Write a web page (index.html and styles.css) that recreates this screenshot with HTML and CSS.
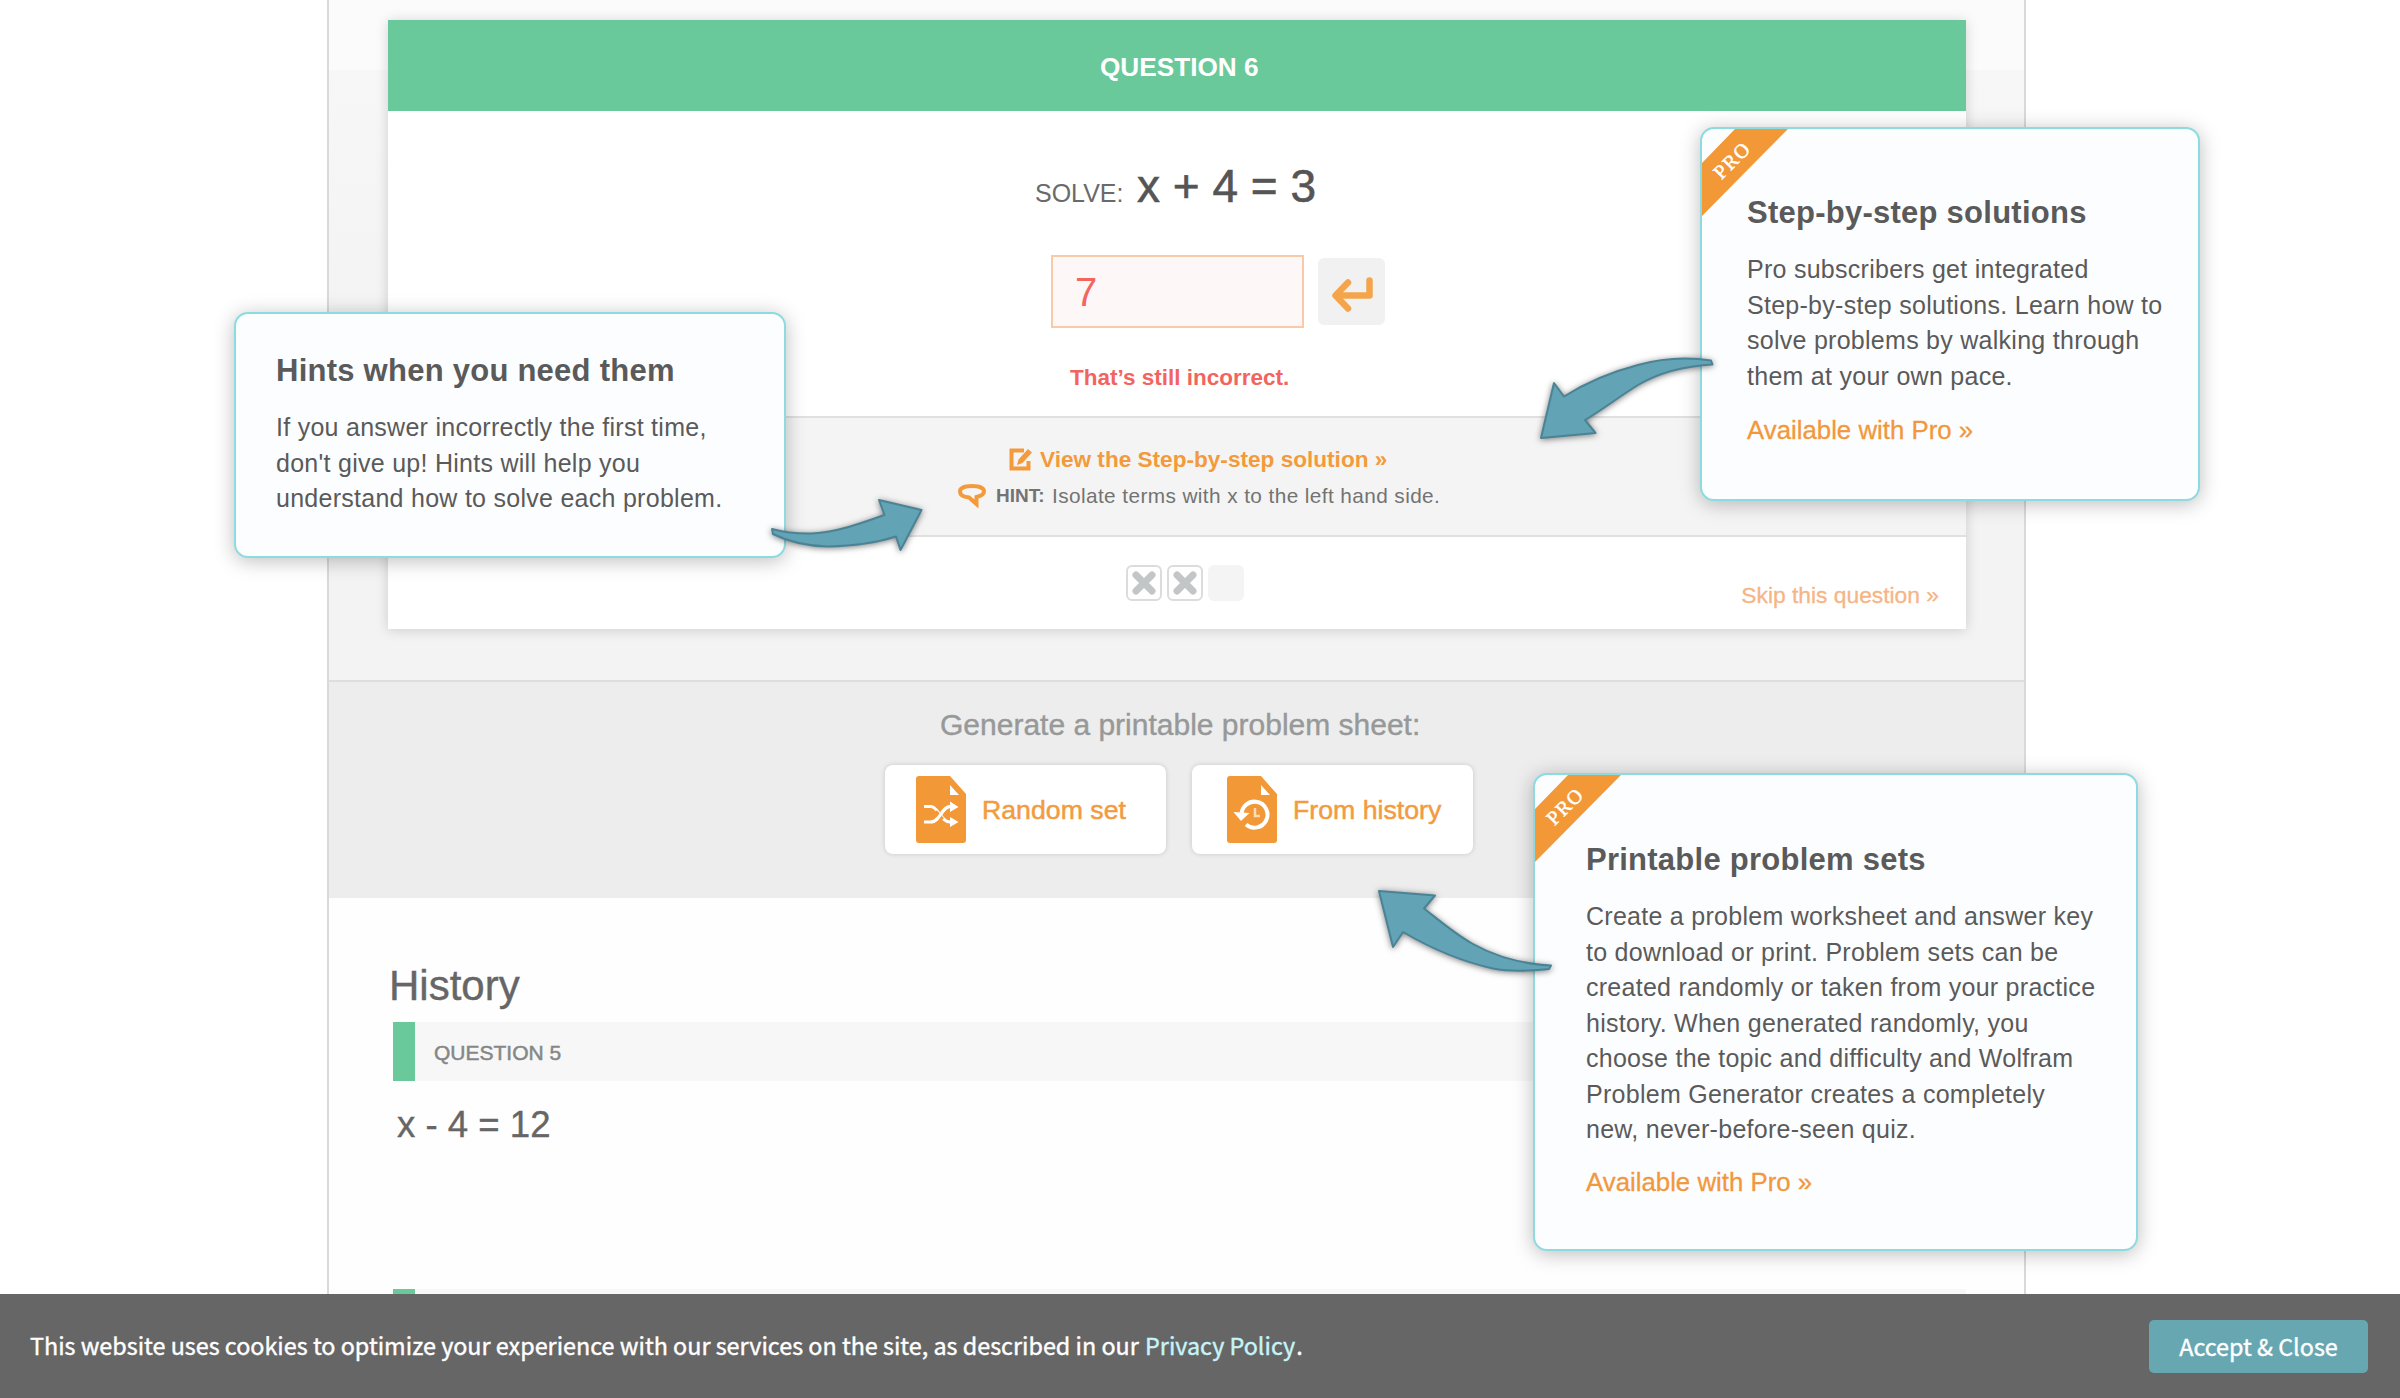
FILE: index.html
```html
<!DOCTYPE html>
<html lang="en">
<head>
<meta charset="utf-8">
<title>Problem Generator</title>
<link rel="stylesheet" href="styles.css">
</head>
<body>
<main class="panel">
  <section class="practice">
    <article class="card">
      <header class="card-head">QUESTION 6</header>
      <div class="card-body">
        <p class="equation"><span class="solve">SOLVE:</span><span class="expr">x + 4 = 3</span></p>
        <div class="answer">
          <div class="field">7</div>
          <div class="enter"><svg width="42" height="40" viewBox="0 0 42 40"><path d="M38.500 6.500V21.500H6M17 8.500 4.500 21.500 17 34.500" fill="none" stroke="#f4a54b" stroke-width="6.500" stroke-linecap="round" stroke-linejoin="round"/></svg></div>
        </div>
        <p class="message">That’s still incorrect.</p>
      </div>
      <div class="help">
        <p class="step"><svg width="24" height="24" viewBox="0 0 24 24"><path d="M15 2.500H2.500V20.500H19.500V13" fill="none" stroke="#f39a3c" stroke-width="4"/><path d="M8 17 9.500 11.500 19 1l4 3.500L13.500 15z" fill="#f39a3c"/></svg><span>View the Step-by-step solution »</span></p>
        <p class="hint"><svg width="28" height="26" viewBox="0 0 28 26"><path d="M14 3C7 3 2 5 2 8.500S6 14 11 14.500L18.500 21V14C23 13 26 11.500 26 8.500 26 5 21 3 14 3z" fill="none" stroke="#f39a3c" stroke-width="4" stroke-linejoin="miter"/></svg><b>HINT:</b><span>Isolate terms with x to the left hand side.</span></p>
      </div>
      <footer class="card-foot">
        <div class="tries">
          <span class="try miss"><svg width="24" height="24" viewBox="0 0 24 24"><path d="M4 4 20 20M20 4 4 20" stroke="#c3c6c6" stroke-width="7" stroke-linecap="round"/></svg></span>
          <span class="try miss"><svg width="24" height="24" viewBox="0 0 24 24"><path d="M4 4 20 20M20 4 4 20" stroke="#c3c6c6" stroke-width="7" stroke-linecap="round"/></svg></span>
          <span class="try"></span>
        </div>
        <a class="skip">Skip this question »</a>
      </footer>
    </article>
  </section>
  <section class="sheets">
    <h2>Generate a printable problem sheet:</h2>
    <div class="sheet-buttons">
      <a class="sheet"><svg width="50" height="67" viewBox="0 0 50 67"><path d="M3 0H34L50 18V64a3 3 0 0 1-3 3H3a3 3 0 0 1-3-3V3a3 3 0 0 1 3-3z" fill="#f29836"/><path d="M34 9V19H43z" fill="#fff"/><path d="M8 30.500H15C22 30.500 25 46 34 46H36M8 46H15C24 46 26 30.500 34 30.500H36" fill="none" stroke="#fff" stroke-width="3"/><path d="M34 25.500 42.500 31 34 36zM34 41 42.500 46 34 51z" fill="#fff"/><path d="M19 36 26 44" stroke="#f29836" stroke-width="5"/><path d="M15 46C24 46 26 30.500 34 30.500" fill="none" stroke="#fff" stroke-width="3"/></svg><span>Random set</span></a>
      <a class="sheet history-sheet"><svg width="50" height="67" viewBox="0 0 50 67"><path d="M3 0H34L50 18V64a3 3 0 0 1-3 3H3a3 3 0 0 1-3-3V3a3 3 0 0 1 3-3z" fill="#f29836"/><path d="M34 9V19H43z" fill="#fff"/><path d="M14.500 39A13 13 0 1 1 19 48.500" fill="none" stroke="#fff" stroke-width="4"/><path d="M6.500 36 22.500 37 14 45z" fill="#fff"/><path d="M28 32V40H33" fill="none" stroke="#fbdcb8" stroke-width="2.500"/></svg><span>From history</span></a>
    </div>
  </section>
  <section class="history">
    <h1>History</h1>
    <div class="row">QUESTION 5</div>
    <p class="past">x - 4 = 12</p>
    <div class="row"></div>
  </section>
</main>

<aside class="callout hints">
  <h3>Hints when you need them</h3>
  <p>If you answer incorrectly the first time,<br>don't give up! Hints will help you<br>understand how to solve each problem.</p>
</aside>
<aside class="callout steps">
  <div class="ribbon"><span>PRO</span></div>
  <h3>Step-by-step solutions</h3>
  <p>Pro subscribers get integrated<br>Step-by-step solutions. Learn how to<br>solve problems by walking through<br>them at your own pace.</p>
  <a>Available with Pro »</a>
</aside>
<aside class="callout sets">
  <div class="ribbon"><span>PRO</span></div>
  <h3>Printable problem sets</h3>
  <p>Create a problem worksheet and answer key<br>to download or print. Problem sets can be<br>created randomly or taken from your practice<br>history. When generated randomly, you<br>choose the topic and difficulty and Wolfram<br>Problem Generator creates a completely<br>new, never-before-seen quiz.</p>
  <a>Available with Pro »</a>
</aside>
<svg class="arrows" width="2400" height="1294" viewBox="0 0 2400 1294">
  <path d="M921.500 510 879 500 884.500 515C862 523 838 532 812 533.500 797 534 783 532 772 529L773 534C789 542 806 546 828 546.500 852 546 876 543 896 536.500L900.500 550z"/>
  <path d="M1541 438 1595.500 433 1585 420C1602 410 1620 396 1638 385 1660 372 1684 366 1712.500 364.500L1711 360.500C1688 357 1663 358 1638 365 1611 372 1584 384 1564 396.500L1554 383z"/>
  <path d="M1379 891 1435 895.500 1424 908.500C1440 921 1455 934 1472 943.500 1496 957 1520 964 1551 965.500L1549 969C1530 971 1511 972 1493 968.500 1459 961 1427 946 1403 932L1393 947z"/>
</svg>

<div class="cookies">
  <p>This website uses cookies to optimize your experience with our services on the site, as described in our <a>Privacy Policy</a>.</p>
  <button>Accept &amp; Close</button>
</div>
</body>
</html>
```

FILE: styles.css
```css
* { box-sizing: border-box; }
body {
  margin: 0;
  height: 1398px;
  overflow: hidden;
  position: relative;
  background: #fff;
  color: #5a5a5a;
  font-family: "Liberation Sans", Arial, sans-serif;
  white-space: nowrap;
}
h1, h2, h3, p { margin: 0; font-weight: normal; }
svg { display: block; flex: none; }

.panel {
  margin-left: 327px;
  width: 1699px;
  height: 1294px;
  overflow: hidden;
  border: solid #d9d9d9;
  border-width: 0 2px;
}
.practice {
  height: 680px;
  padding: 20px 58px 0 59px;
  background: linear-gradient(#fbfbfb 70px, #f7f7f7 70px, #f3f3f3 330px);
}
.card {
  height: 609px;
  background: #fff;
  box-shadow: 0 1px 12px rgba(0, 0, 0, .16);
}
.card-head {
  height: 91px;
  padding-top: 4px;
  background: #69c99a;
  color: #fff;
  font-size: 26.200px;
  font-weight: bold;
  line-height: 86px;
  padding-left: 712px;
}
.card-body { height: 305px; padding-top: 45px; }
.equation {
  display: flex;
  align-items: baseline;
  height: 60px;
  padding-left: 647px;
  line-height: 60px;
}
.solve { width: 102px; font-size: 25px; color: #6a6a6a; }
.expr { font-size: 46px; color: #555; -webkit-text-stroke: .6px #555; }
.answer { display: flex; align-items: center; gap: 14px; margin: 39px 0 0 663px; }
.field {
  width: 253px;
  height: 73px;
  padding-left: 22px;
  border: 2px solid #f9caa8;
  background: #fef7f7;
  color: #f2665f;
  font-size: 40px;
  line-height: 71px;
}
.enter {
  display: flex;
  justify-content: center;
  align-items: center;
  width: 67px;
  height: 67px;
  border-radius: 6px;
  background: #f1f1f1;
}
.enter svg { margin-top: 4px; }
.message {
  margin-top: 35px;
  padding-left: 682px;
  color: #f2645e;
  font-size: 22.500px;
  font-weight: bold;
  line-height: 30px;
}
.help {
  height: 121px;
  padding-top: 24px;
  border: solid #e0e0e0;
  border-width: 2px 0;
  background: #f4f4f4;
}
.step, .hint { display: flex; align-items: center; height: 36px; }
.step {
  gap: 7px;
  padding-left: 621px;
  color: #f39a3c;
  font-size: 22.600px;
  font-weight: bold;
}
.hint { padding-left: 570px; color: #737373; font-size: 20.800px; letter-spacing: .4px; }
.hint b { margin-left: 10px; width: 56px; font-size: 19px; letter-spacing: 0; }
.card-foot {
  display: flex;
  justify-content: space-between;
  height: 92px;
  padding: 28px 27px 0 738px;
}
.tries { display: flex; gap: 5px; }
.try {
  display: flex;
  justify-content: center;
  align-items: center;
  width: 36px;
  height: 36px;
  border-radius: 6px;
  background: #f4f4f4;
}
.miss { border: 2px solid #dcdcdc; background: #fff; }
.skip { color: #f5b585; font-size: 22.800px; line-height: 61px; -webkit-text-stroke: .3px #f5b585; }

.sheets {
  height: 218px;
  padding-top: 24px;
  border-top: 2px solid #dedede;
  background: #ededed;
}
.sheets h2 { padding-left: 611px; color: #979999; font-size: 30px; line-height: 38px; -webkit-text-stroke: .4px #979999; }
.sheet-buttons { display: flex; gap: 26px; margin: 21px 0 0 556px; }
.sheet {
  display: flex;
  align-items: center;
  gap: 16px;
  width: 281px;
  height: 89px;
  padding-left: 31px;
  border-radius: 8px;
  background: #fff;
  box-shadow: 0 0 5px rgba(0, 0, 0, .16);
  color: #f29b40;
  font-size: 26.700px;
  -webkit-text-stroke: .5px #f29b40;
}
.history-sheet { padding-left: 35px; }
.sheet span { padding-top: 1px; }

.history { padding: 0 58px 0 64px; color: #666; background: #fefefe; height: 396px; }
.history h1 { margin-left: -4px; padding-top: 63px; height: 124px; font-size: 42px; line-height: 50px; -webkit-text-stroke: .4px #666; }
.row {
  height: 59px;
  padding-left: 19px;
  border-left: 22px solid #69c99a;
  background: #f7f7f7;
  color: #858787;
  font-size: 21px;
  line-height: 62px;
  -webkit-text-stroke: .5px #858787;
}
.past { height: 208px; padding: 23px 0 0 4px; font-size: 36.600px; line-height: 42px; -webkit-text-stroke: .4px #666; }

.callout {
  position: absolute;
  border: 2px solid #8cdbe0;
  border-radius: 14px;
  background: #fcfdff;
  box-shadow: 0 3px 20px rgba(0, 0, 0, .26);
  overflow: hidden;
}
.callout h3 { font-size: 31px; font-weight: bold; line-height: 40px; letter-spacing: .25px; }
.callout p { margin-top: 19px; font-size: 25px; line-height: 35.500px; letter-spacing: .27px; }
.callout a { display: block; color: #f2983a; font-size: 25.800px; line-height: 36px; margin-top: 18px; -webkit-text-stroke: .3px #f2983a; }
.hints { left: 234px; top: 312px; width: 552px; height: 246px; padding: 37px 0 0 40px; }
.steps { left: 1700px; top: 127px; width: 500px; height: 374px; padding: 64px 0 0 45px; }
.sets { left: 1533px; top: 773px; width: 605px; height: 478px; padding: 65px 0 0 51px; }
.sets a { margin-top: 16px; }
.ribbon {
  position: absolute;
  left: 0;
  top: 0;
  width: 86px;
  height: 87px;
  background: #f29836;
  clip-path: polygon(33px 0, 86px 0, 0 87px, 0 34px);
}
.ribbon span {
  position: absolute;
  left: 0;
  top: 19px;
  width: 60px;
  text-align: center;
  color: #fff;
  font: 20px/24px "Liberation Serif", serif;
  letter-spacing: 1.500px;
  -webkit-text-stroke: .5px #fff;
  transform: rotate(-45deg);
}
.arrows { position: absolute; left: 0; top: 0; filter: drop-shadow(0 1px 3px rgba(0, 0, 0, .5)); }
.arrows path { fill: #62a3b6; stroke: #4a8396; stroke-width: 2; stroke-linejoin: round; }

.cookies {
  position: relative;
  display: flex;
  justify-content: space-between;
  align-items: center;
  height: 104px;
  padding: 0 32px 0 30px;
  background: #666;
  color: #fff;
  font: 23.350px/36px "Noto Sans CJK SC", sans-serif;
  -webkit-text-stroke: .4px currentColor;
}
.cookies p { margin-top: -2px; }
.cookies a { color: #c6f4f8; margin: 0 1px; }
.cookies button {
  width: 219px;
  height: 53px;
  margin-top: 1px;
  padding: 0 0 2px;
  border: 0;
  border-radius: 5px;
  background: #67a7b1;
  color: #fff;
  font: inherit;
}
```
